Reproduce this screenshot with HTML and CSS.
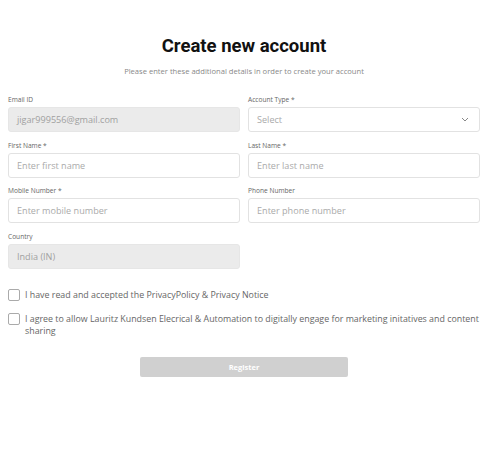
FILE: index.html
```html
<!DOCTYPE html>
<html>
<head>
<meta charset="utf-8">
<link rel="stylesheet" href="styles.css">
</head>
<body>
<div class="page">
  <h1 class="title">Create new account</h1>
  <p class="subtitle">Please enter these additional details in order to create your account</p>
  <div class="grid">
    <div class="field">
      <label class="label">Email ID</label>
      <div class="input disabled">jigar999556@gmail.com</div>
    </div>
    <div class="field">
      <label class="label">Account Type *</label>
      <div class="input select"><span class="ph">Select</span>
        <svg class="chev" width="8" height="5" viewBox="0 0 8 5"><path d="M1 1l3 3 3-3" fill="none" stroke="#888" stroke-width="1"/></svg>
      </div>
    </div>
    <div class="field">
      <label class="label">First Name *</label>
      <div class="input"><span class="ph">Enter first name</span></div>
    </div>
    <div class="field">
      <label class="label">Last Name *</label>
      <div class="input"><span class="ph">Enter last name</span></div>
    </div>
    <div class="field">
      <label class="label">Mobile Number *</label>
      <div class="input"><span class="ph">Enter mobile number</span></div>
    </div>
    <div class="field">
      <label class="label">Phone Number</label>
      <div class="input"><span class="ph">Enter phone number</span></div>
    </div>
    <div class="field">
      <label class="label">Country</label>
      <div class="input disabled">India (IN)</div>
    </div>
  </div>
  <div class="checks">
    <div class="check"><span class="box"></span><span class="ctext">I have read and accepted the PrivacyPolicy &amp; Privacy Notice</span></div>
    <div class="check"><span class="box"></span><span class="ctext">I agree to allow Lauritz Kundsen Elecrical &amp; Automation to digitally engage for marketing initatives and content sharing</span></div>
  </div>
  <div class="actions"><button class="btn">Register</button></div>
</div>
</body>
</html>
```
FILE: styles.css
```css
html, body { margin: 0; padding: 0; background: #fff; }
body { font-family: "Open Sans", "Liberation Sans", sans-serif; color: #555; }
.page { padding: 34px 9px 0 8px; }
.title { margin: 0; text-align: center; font-family: Roboto, Inter, sans-serif; font-weight: 700; font-size: 18.5px; line-height: 24px; color: #111; }
.subtitle { margin: 7px 0 0; text-align: center; font-size: 7.6px; line-height: 12px; color: #888; }
.grid { display: grid; grid-template-columns: 1fr 1fr; column-gap: 8px; row-gap: 8.5px; margin-top: 18px; }
.field { display: flex; flex-direction: column; }
.label { font-size: 6.6px; line-height: 10px; color: #666; margin-bottom: 2px; }
.input { height: 25px; box-sizing: border-box; border: 1px solid #e2e2e2; border-radius: 3px; display: flex; align-items: center; padding: 0 8px; font-size: 9.1px; color: #aaa; background: #fff; }
.input.disabled { background: #ebebeb; border-color: #e6e6e6; color: #a0a0a0; }
.ph { color: #aaa; }
.select { justify-content: space-between; padding-right: 10px; }
.chev { display: block; }
.checks { margin-top: 20px; margin-right: -4px; display: flex; flex-direction: column; gap: 12px; }
.check { display: flex; align-items: flex-start; gap: 5px; }
.box { flex: none; width: 12px; height: 12px; box-sizing: border-box; border: 1px solid #aaa; border-radius: 2px; }
.ctext { font-size: 8.85px; line-height: 12px; color: #666; }
.actions { display: flex; justify-content: center; margin-top: 20px; }
.btn { width: 208px; height: 20px; border: none; border-radius: 2px; background: #d0d0d0; color: #fff; font-family: inherit; font-weight: 700; font-size: 7.5px; padding: 0; }
```
